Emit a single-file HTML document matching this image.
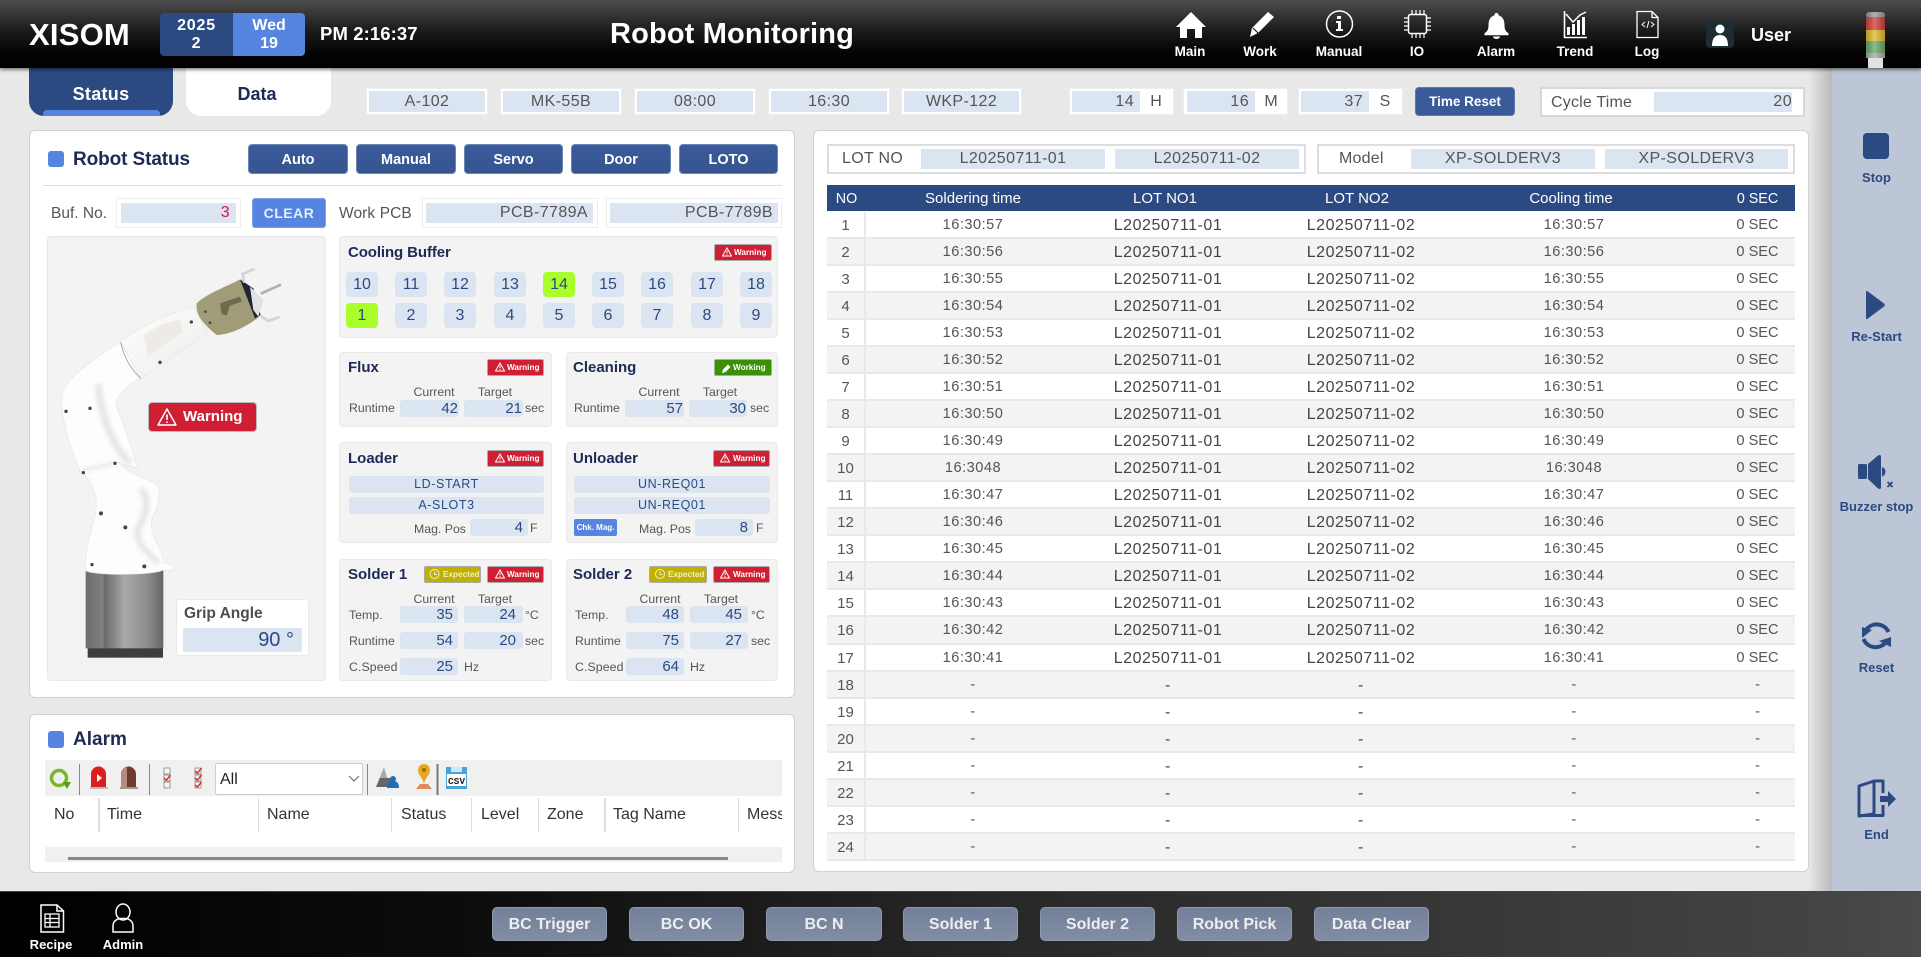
<!DOCTYPE html>
<html lang="en"><head><meta charset="utf-8"><title>Robot Monitoring</title>
<style>
html,body{margin:0;padding:0;width:1921px;height:957px;overflow:hidden;background:#e8e8e8;font-family:"Liberation Sans",Arial,sans-serif;color:#555}
div,span{box-sizing:border-box}
.a{position:absolute}
.t{position:absolute;height:20px;line-height:20px;white-space:nowrap;margin-top:1px}
.c{transform:translateX(-50%)}
.o{position:absolute;background:#fff;border:1px solid #eee}
.f{position:absolute;background:#dbe5f1;color:#555;font-size:16px;text-align:center;letter-spacing:.4px;white-space:nowrap}
.n{color:#2c4a82;font-size:15px;text-align:right;border-radius:3px;height:17px;line-height:17px;letter-spacing:0}
.nav{position:absolute;top:43px;height:18px;line-height:18px;font-size:13.5px;font-weight:bold;color:#fff;transform:translateX(-50%);white-space:nowrap}
.card{position:absolute;background:#fff;border:1px solid #d2d2d2;border-radius:6px}
.btn{position:absolute;top:144px;height:30px;line-height:30px;text-align:center;color:#fff;font-size:14.5px;font-weight:bold;background:linear-gradient(#3a5a9c,#37558f);border:1px solid #6c86b8;border-radius:4px}
.p{position:absolute;background:#f3f3f3;border:1px solid #e9e9e9;border-radius:4px}
.h{position:absolute;height:20px;line-height:20px;font-size:15px;font-weight:bold;color:#1e2a55;white-space:nowrap;margin-top:1px}
.b{position:absolute;height:17px;line-height:15px;border:1px solid #aaa;border-radius:2px;color:#fff;font-size:8.2px;font-weight:bold;padding-left:19px;white-space:nowrap}
.w{background:#d01f35}.g{background:#3a9006}.e{background:#c2b000}
.cell{position:absolute;width:32px;height:25px;line-height:25px;background:#dbe5f1;border-radius:4px;text-align:center;font-size:16px;color:#2c4a82}
.on{background:#aaff2a}
.l{font-size:12.3px;color:#555;margin-top:0}
.cu{margin-top:1px}
.bar{position:absolute;height:17px;line-height:17px;background:#dbe5f1;border-radius:3px;color:#2c4a82;font-size:12.5px;text-align:center;letter-spacing:.6px}
.fb{position:absolute;top:907px;height:34px;line-height:33px;text-align:center;color:#eee;font-weight:bold;font-size:16px;background:linear-gradient(#74809a,#818da3);border:1px solid #8d98ab;border-radius:5px}
.sl{position:absolute;left:1832px;width:89px;text-align:center;color:#2c4a82;font-weight:bold;font-size:13px;height:18px;line-height:18px;white-space:nowrap;margin-top:1px}
#tb{position:absolute;left:827px;top:185px;width:968px}
#tb .hd{height:26px;line-height:28px;background:#2c4a82;color:#fff;font-size:15px;display:flex;text-align:center;margin-bottom:1px}
#tb .hd span:nth-child(1){width:39px;font-size:14.3px}
#tb .hd span:nth-child(2){width:214px}
#tb .hd span:nth-child(3){width:170px}
#tb .hd span:nth-child(4){width:214px}
#tb .hd span:nth-child(5){width:214px}
#tb .hd span:nth-child(6){width:117px;padding-left:42px;font-size:14.3px}
#tb .r{display:flex;height:27.04px;line-height:27px;border-bottom:2px solid #e9e9e9;background:#fff;text-align:center;font-size:14.6px;letter-spacing:.5px;color:#555}
#tb .r:nth-child(odd){background:#f3f3f3}
#tb .r span:nth-child(1){width:39px;border-right:2px solid #e9e9e9;font-size:15px;letter-spacing:0}
#tb .r span:nth-child(2){width:214px}
#tb .r span:nth-child(3){width:176px;font-size:16px;letter-spacing:.55px;color:#444}
#tb .r span:nth-child(4){width:210px;font-size:16px;letter-spacing:.55px;color:#444}
#tb .r span:nth-child(5){width:216px}
#tb .r span:nth-child(6){width:113px;padding-left:38px;letter-spacing:0}
svg#ov{position:absolute;left:0;top:0;z-index:5;pointer-events:none}
</style></head><body>

<!-- main surfaces -->
<div class="a" style="left:1808px;top:68px;width:24px;height:823px;background:linear-gradient(to right,rgba(0,0,0,0),rgba(0,0,0,.2))"></div>
<div class="a" style="left:1832px;top:68px;width:89px;height:823px;background:#bcc6d6"></div>

<!-- tabs -->
<div class="a" style="left:29px;top:60px;width:144px;height:56px;background:#2c4a82;border-radius:0 0 15px 15px;overflow:hidden"><div class="a" style="left:14px;top:50px;width:117px;height:8px;background:#5585e0;border-radius:4px 4px 0 0"></div></div>
<div class="t c" style="left:101px;top:83px;color:#fff;font-size:18px;font-weight:bold;letter-spacing:.3px">Status</div>
<div class="a" style="left:186px;top:60px;width:145px;height:56px;background:#fff;border-radius:0 0 15px 15px"></div>
<div class="t c" style="left:257px;top:83px;color:#1e2a55;font-size:18px;font-weight:bold">Data</div>

<!-- header -->
<div class="a" style="left:0;top:0;width:1921px;height:68px;background:linear-gradient(#4e4e4e,#1e1e1e 42%,#050505 75%,#000);box-shadow:0 2px 3px rgba(0,0,0,.45)"></div>
<div class="a" style="left:29px;top:17px;height:36px;line-height:36px;font-size:31px;font-weight:bold;color:#fff;letter-spacing:.2px;z-index:2">XISOM</div>
<div class="a" style="left:160px;top:13px;width:73px;height:43px;background:#2c4a82;border-radius:4px 0 0 4px;color:#fff;text-align:center;font-size:16px;font-weight:bold;letter-spacing:.8px;line-height:18px;padding-top:4px">2025<br>2</div>
<div class="a" style="left:233px;top:13px;width:72px;height:43px;background:#5585e0;border-radius:0 4px 4px 0;color:#fff;text-align:center;font-size:16px;font-weight:bold;line-height:18px;padding-top:4px">Wed<br>19</div>
<div class="t" style="left:320px;top:23px;color:#fff;font-size:18.5px;font-weight:bold;letter-spacing:.1px">PM 2:16:37</div>
<div class="a" style="left:610px;top:15px;height:38px;line-height:38px;color:#fff;font-size:29px;font-weight:bold;letter-spacing:.15px;white-space:nowrap">Robot Monitoring</div>
<div class="nav" style="left:1190px">Main</div>
<div class="nav" style="left:1260px">Work</div>
<div class="nav" style="left:1339px">Manual</div>
<div class="nav" style="left:1417px">IO</div>
<div class="nav" style="left:1496px">Alarm</div>
<div class="nav" style="left:1575px">Trend</div>
<div class="nav" style="left:1647px">Log</div>
<div class="t" style="left:1751px;top:24px;color:#fff;font-size:18px;font-weight:bold">User</div>

<!-- info strip -->
<div class="o" style="left:366px;top:88px;width:122px;height:27px"></div><div class="f" style="left:369px;top:91px;width:116px;height:21px;line-height:21px">A-102</div>
<div class="o" style="left:500px;top:88px;width:122px;height:27px"></div><div class="f" style="left:503px;top:91px;width:116px;height:21px;line-height:21px">MK-55B</div>
<div class="o" style="left:634px;top:88px;width:122px;height:27px"></div><div class="f" style="left:637px;top:91px;width:116px;height:21px;line-height:21px">08:00</div>
<div class="o" style="left:768px;top:88px;width:122px;height:27px"></div><div class="f" style="left:771px;top:91px;width:116px;height:21px;line-height:21px">16:30</div>
<div class="o" style="left:901px;top:88px;width:121px;height:27px"></div><div class="f" style="left:904px;top:91px;width:115px;height:21px;line-height:21px">WKP-122</div>
<div class="o" style="left:1069px;top:88px;width:105px;height:27px"></div><div class="f" style="left:1072px;top:91px;width:68px;height:21px;line-height:21px;text-align:right;padding-right:6px">14</div><div class="t c" style="left:1156px;top:91px;font-size:16px">H</div>
<div class="o" style="left:1183px;top:88px;width:105px;height:27px"></div><div class="f" style="left:1187px;top:91px;width:68px;height:21px;line-height:21px;text-align:right;padding-right:6px">16</div><div class="t c" style="left:1271px;top:91px;font-size:16px">M</div>
<div class="o" style="left:1298px;top:88px;width:105px;height:27px"></div><div class="f" style="left:1301px;top:91px;width:68px;height:21px;line-height:21px;text-align:right;padding-right:6px">37</div><div class="t c" style="left:1385px;top:91px;font-size:16px">S</div>
<div class="a" style="left:1415px;top:87px;width:100px;height:29px;line-height:27px;text-align:center;background:#3b5a9a;border:1px solid #5c78b0;border-radius:4px;color:#fff;font-size:13.5px;font-weight:bold;white-space:nowrap">Time Reset</div>
<div class="a" style="left:1540px;top:87px;width:265px;height:30px;background:#fff;border:2px solid #d8d8d8"></div>
<div class="t" style="left:1551px;top:92px;font-size:16px;letter-spacing:.2px">Cycle Time</div>
<div class="f" style="left:1654px;top:92px;width:138px;height:20px;line-height:20px;text-align:right">20</div>

<!-- Robot status card -->
<div class="card" style="left:29px;top:130px;width:766px;height:568px"></div>
<div class="a" style="left:48px;top:151px;width:16px;height:16px;background:#5585e0;border-radius:3px"></div>
<div class="t" style="left:73px;top:149px;font-size:19px;font-weight:bold;color:#1e2a55;letter-spacing:-.1px">Robot Status</div>
<div class="btn" style="left:248px;width:100px">Auto</div>
<div class="btn" style="left:356px;width:100px">Manual</div>
<div class="btn" style="left:464px;width:99px">Servo</div>
<div class="btn" style="left:571px;width:100px">Door</div>
<div class="btn" style="left:679px;width:99px">LOTO</div>
<div class="a" style="left:43px;top:185px;width:739px;height:1px;background:#ddd"></div>

<div class="t" style="left:51px;top:203px;font-size:15.5px">Buf. No.</div>
<div class="o" style="left:116px;top:198px;width:125px;height:30px"></div>
<div class="f" style="left:121px;top:203px;width:115px;height:20px;line-height:20px;text-align:right;padding-right:6px;color:#d8104e">3</div>
<div class="a" style="left:252px;top:198px;width:74px;height:30px;line-height:28px;background:#5585e0;border:1px solid #7a9fe6;border-radius:3px;color:#e6effa;font-size:14px;font-weight:bold;text-align:center;letter-spacing:.5px">CLEAR</div>
<div class="t" style="left:339px;top:203px;font-size:15.5px;letter-spacing:.1px">Work PCB</div>
<div class="o" style="left:422px;top:198px;width:176px;height:30px"></div>
<div class="f" style="left:426px;top:203px;width:167px;height:20px;line-height:20px;text-align:right;padding-right:5px">PCB-7789A</div>
<div class="o" style="left:606px;top:198px;width:176px;height:30px"></div>
<div class="f" style="left:610px;top:203px;width:168px;height:20px;line-height:20px;text-align:right;padding-right:5px">PCB-7789B</div>

<!-- robot panel -->
<div class="p" style="left:47px;top:236px;width:279px;height:445px"></div>
<div class="a" style="left:148px;top:402px;width:109px;height:30px;line-height:28px;background:#d01f35;border:1px solid #bbb;border-radius:4px;color:#fff;font-size:15px;font-weight:bold;padding-left:34px">Warning</div>
<div class="a" style="left:176px;top:599px;width:133px;height:57px;background:#fff;border:1px solid #e9e9e9;border-radius:3px"></div>
<div class="t" style="left:184px;top:603px;font-size:15.5px;font-weight:bold;color:#4d4d4d">Grip Angle</div>
<div class="a" style="left:183px;top:628px;width:119px;height:24px;line-height:24px;background:#dbe5f1;border-radius:2px;text-align:right;padding-right:8px;color:#2c4a82;font-size:20px">90 °</div>

<!-- cooling buffer -->
<div class="p" style="left:339px;top:236px;width:439px;height:102px"></div>
<div class="h" style="left:348px;top:242px;letter-spacing:-.1px">Cooling Buffer</div>
<div class="b w" style="left:714px;top:244px;width:58px">Warning</div>
<div class="cell" style="left:346px;top:272px">10</div><div class="cell" style="left:395px;top:272px">11</div><div class="cell" style="left:444px;top:272px">12</div><div class="cell" style="left:494px;top:272px">13</div><div class="cell on" style="left:543px;top:272px">14</div><div class="cell" style="left:592px;top:272px">15</div><div class="cell" style="left:641px;top:272px">16</div><div class="cell" style="left:691px;top:272px">17</div><div class="cell" style="left:740px;top:272px">18</div>
<div class="cell on" style="left:346px;top:303px">1</div><div class="cell" style="left:395px;top:303px">2</div><div class="cell" style="left:444px;top:303px">3</div><div class="cell" style="left:494px;top:303px">4</div><div class="cell" style="left:543px;top:303px">5</div><div class="cell" style="left:592px;top:303px">6</div><div class="cell" style="left:641px;top:303px">7</div><div class="cell" style="left:691px;top:303px">8</div><div class="cell" style="left:740px;top:303px">9</div>

<!-- flux -->
<div class="p" style="left:339px;top:352px;width:213px;height:75px"></div>
<div class="h" style="left:348px;top:357px">Flux</div>
<div class="b w" style="left:487px;top:359px;width:57px">Warning</div>
<div class="t c l cu" style="left:434px;top:381px">Current</div><div class="t c l cu" style="left:495px;top:381px">Target</div>
<div class="t l" style="left:349px;top:398px">Runtime</div>
<div class="f n" style="left:400px;top:400px;width:59px;padding-right:1px">42</div>
<div class="f n" style="left:464px;top:400px;width:59px;padding-right:1px">21</div>
<div class="t l" style="left:525px;top:398px">sec</div>

<!-- cleaning -->
<div class="p" style="left:566px;top:352px;width:212px;height:75px"></div>
<div class="h" style="left:573px;top:357px">Cleaning</div>
<div class="b g" style="left:714px;top:359px;width:58px;padding-left:18px">Working</div>
<div class="t c l cu" style="left:659px;top:381px">Current</div><div class="t c l cu" style="left:720px;top:381px">Target</div>
<div class="t l" style="left:574px;top:398px">Runtime</div>
<div class="f n" style="left:625px;top:400px;width:59px;padding-right:1px">57</div>
<div class="f n" style="left:689px;top:400px;width:58px;padding-right:1px">30</div>
<div class="t l" style="left:750px;top:398px">sec</div>

<!-- loader -->
<div class="p" style="left:339px;top:442px;width:213px;height:101px"></div>
<div class="h" style="left:348px;top:448px">Loader</div>
<div class="b w" style="left:487px;top:450px;width:57px">Warning</div>
<div class="bar" style="left:349px;top:476px;width:195px">LD-START</div>
<div class="bar" style="left:349px;top:497px;width:195px">A-SLOT3</div>
<div class="t l" style="left:414px;top:519px">Mag. Pos</div>
<div class="f n" style="left:470px;top:519px;width:58px;padding-right:5px">4</div>
<div class="t l" style="left:530px;top:518px">F</div>

<!-- unloader -->
<div class="p" style="left:566px;top:442px;width:212px;height:101px"></div>
<div class="h" style="left:573px;top:448px">Unloader</div>
<div class="b w" style="left:713px;top:450px;width:57px">Warning</div>
<div class="bar" style="left:574px;top:476px;width:196px">UN-REQ01</div>
<div class="bar" style="left:574px;top:497px;width:196px">UN-REQ01</div>
<div class="a" style="left:574px;top:519px;width:43px;height:17px;line-height:17px;background:#5585e0;border-radius:2px;color:#fff;font-size:8px;font-weight:bold;text-align:center;white-space:nowrap">Chk. Mag.</div>
<div class="t l" style="left:639px;top:519px">Mag. Pos</div>
<div class="f n" style="left:695px;top:519px;width:58px;padding-right:5px">8</div>
<div class="t l" style="left:756px;top:518px">F</div>

<!-- solder 1 -->
<div class="p" style="left:339px;top:559px;width:213px;height:122px"></div>
<div class="h" style="left:348px;top:564px">Solder 1</div>
<div class="b e" style="left:424px;top:566px;width:57px;padding-left:18px;color:#f1efc8">Expected</div>
<div class="b w" style="left:487px;top:566px;width:57px">Warning</div>
<div class="t c l cu" style="left:434px;top:588px">Current</div><div class="t c l cu" style="left:495px;top:588px">Target</div>
<div class="t l" style="left:349px;top:605px">Temp.</div>
<div class="f n" style="left:400px;top:606px;width:58px;padding-right:5px">35</div><div class="f n" style="left:464px;top:606px;width:59px;padding-right:7px">24</div><div class="t l" style="left:525px;top:605px">°C</div>
<div class="t l" style="left:349px;top:631px">Runtime</div>
<div class="f n" style="left:400px;top:632px;width:58px;padding-right:5px">54</div><div class="f n" style="left:464px;top:632px;width:59px;padding-right:7px">20</div><div class="t l" style="left:525px;top:631px">sec</div>
<div class="t l" style="left:349px;top:657px;letter-spacing:.1px">C.Speed</div>
<div class="f n" style="left:400px;top:658px;width:58px;padding-right:5px">25</div><div class="t l" style="left:464px;top:657px">Hz</div>

<!-- solder 2 -->
<div class="p" style="left:566px;top:559px;width:212px;height:122px"></div>
<div class="h" style="left:573px;top:564px">Solder 2</div>
<div class="b e" style="left:649px;top:566px;width:58px;padding-left:18px;color:#f1efc8">Expected</div>
<div class="b w" style="left:713px;top:566px;width:57px">Warning</div>
<div class="t c l cu" style="left:660px;top:588px">Current</div><div class="t c l cu" style="left:721px;top:588px">Target</div>
<div class="t l" style="left:575px;top:605px">Temp.</div>
<div class="f n" style="left:626px;top:606px;width:58px;padding-right:5px">48</div><div class="f n" style="left:690px;top:606px;width:58px;padding-right:6px">45</div><div class="t l" style="left:751px;top:605px">°C</div>
<div class="t l" style="left:575px;top:631px">Runtime</div>
<div class="f n" style="left:626px;top:632px;width:58px;padding-right:5px">75</div><div class="f n" style="left:690px;top:632px;width:58px;padding-right:6px">27</div><div class="t l" style="left:751px;top:631px">sec</div>
<div class="t l" style="left:575px;top:657px;letter-spacing:.1px">C.Speed</div>
<div class="f n" style="left:626px;top:658px;width:58px;padding-right:5px">64</div><div class="t l" style="left:690px;top:657px">Hz</div>

<!-- alarm card -->
<div class="card" style="left:29px;top:714px;width:766px;height:159px"></div>
<div class="a" style="left:48px;top:731px;width:16px;height:17px;background:#5585e0;border-radius:3px"></div>
<div class="t" style="left:73px;top:729px;font-size:19px;font-weight:bold;color:#1e2a55">Alarm</div>
<div class="a" style="left:45px;top:760px;width:737px;height:36px;background:#f0f0f0"></div>
<div class="a" style="left:215px;top:763px;width:148px;height:32px;background:#fff;border:1px solid #ccc;border-radius:2px"></div>
<div class="t" style="left:220px;top:769px;font-size:16px;color:#222">All</div>
<div class="t" style="left:54px;top:804px;font-size:16px;color:#333">No</div>
<div class="t" style="left:107px;top:804px;font-size:16px;color:#333">Time</div>
<div class="t" style="left:267px;top:804px;font-size:16px;color:#333">Name</div>
<div class="t" style="left:401px;top:804px;font-size:16px;color:#333">Status</div>
<div class="t" style="left:481px;top:804px;font-size:16px;color:#333">Level</div>
<div class="t" style="left:547px;top:804px;font-size:16px;color:#333">Zone</div>
<div class="t" style="left:613px;top:804px;font-size:16px;color:#333">Tag Name</div>
<div class="t" style="left:747px;top:804px;width:35px;overflow:hidden;font-size:16px;color:#333">Message</div>
<div class="a" style="left:98px;top:798px;width:2px;height:34px;background:#ddd"></div>
<div class="a" style="left:258px;top:798px;width:1px;height:34px;background:#ddd"></div>
<div class="a" style="left:391px;top:798px;width:1px;height:34px;background:#ddd"></div>
<div class="a" style="left:471px;top:798px;width:1px;height:34px;background:#ddd"></div>
<div class="a" style="left:538px;top:798px;width:1px;height:34px;background:#ddd"></div>
<div class="a" style="left:604px;top:798px;width:2px;height:34px;background:#ddd"></div>
<div class="a" style="left:738px;top:798px;width:1px;height:34px;background:#ddd"></div>
<div class="a" style="left:45px;top:847px;width:737px;height:15px;background:#f0f0f0"></div>
<div class="a" style="left:68px;top:857px;width:660px;height:3px;background:#888"></div>

<!-- data card -->
<div class="card" style="left:813px;top:130px;width:996px;height:742px"></div>
<div class="a" style="left:827px;top:144px;width:479px;height:30px;background:#fff;border:2px solid #ddd"></div>
<div class="t" style="left:842px;top:148px;font-size:16px;letter-spacing:.3px">LOT NO</div>
<div class="f" style="left:921px;top:149px;width:184px;height:20px;line-height:20px">L20250711-01</div>
<div class="f" style="left:1115px;top:149px;width:184px;height:20px;line-height:20px">L20250711-02</div>
<div class="a" style="left:1317px;top:144px;width:478px;height:30px;background:#fff;border:2px solid #ddd"></div>
<div class="t" style="left:1339px;top:148px;font-size:16px;letter-spacing:.2px">Model</div>
<div class="f" style="left:1411px;top:149px;width:184px;height:20px;line-height:20px">XP-SOLDERV3</div>
<div class="f" style="left:1605px;top:149px;width:183px;height:20px;line-height:20px">XP-SOLDERV3</div>

<div id="tb">
<div class="hd"><span>NO</span><span>Soldering time</span><span>LOT NO1</span><span>LOT NO2</span><span>Cooling time</span><span>0 SEC</span></div>
<div class="r"><span>1</span><span>16:30:57</span><span>L20250711-01</span><span>L20250711-02</span><span>16:30:57</span><span>0 SEC</span></div>
<div class="r"><span>2</span><span>16:30:56</span><span>L20250711-01</span><span>L20250711-02</span><span>16:30:56</span><span>0 SEC</span></div>
<div class="r"><span>3</span><span>16:30:55</span><span>L20250711-01</span><span>L20250711-02</span><span>16:30:55</span><span>0 SEC</span></div>
<div class="r"><span>4</span><span>16:30:54</span><span>L20250711-01</span><span>L20250711-02</span><span>16:30:54</span><span>0 SEC</span></div>
<div class="r"><span>5</span><span>16:30:53</span><span>L20250711-01</span><span>L20250711-02</span><span>16:30:53</span><span>0 SEC</span></div>
<div class="r"><span>6</span><span>16:30:52</span><span>L20250711-01</span><span>L20250711-02</span><span>16:30:52</span><span>0 SEC</span></div>
<div class="r"><span>7</span><span>16:30:51</span><span>L20250711-01</span><span>L20250711-02</span><span>16:30:51</span><span>0 SEC</span></div>
<div class="r"><span>8</span><span>16:30:50</span><span>L20250711-01</span><span>L20250711-02</span><span>16:30:50</span><span>0 SEC</span></div>
<div class="r"><span>9</span><span>16:30:49</span><span>L20250711-01</span><span>L20250711-02</span><span>16:30:49</span><span>0 SEC</span></div>
<div class="r"><span>10</span><span>16:3048</span><span>L20250711-01</span><span>L20250711-02</span><span>16:3048</span><span>0 SEC</span></div>
<div class="r"><span>11</span><span>16:30:47</span><span>L20250711-01</span><span>L20250711-02</span><span>16:30:47</span><span>0 SEC</span></div>
<div class="r"><span>12</span><span>16:30:46</span><span>L20250711-01</span><span>L20250711-02</span><span>16:30:46</span><span>0 SEC</span></div>
<div class="r"><span>13</span><span>16:30:45</span><span>L20250711-01</span><span>L20250711-02</span><span>16:30:45</span><span>0 SEC</span></div>
<div class="r"><span>14</span><span>16:30:44</span><span>L20250711-01</span><span>L20250711-02</span><span>16:30:44</span><span>0 SEC</span></div>
<div class="r"><span>15</span><span>16:30:43</span><span>L20250711-01</span><span>L20250711-02</span><span>16:30:43</span><span>0 SEC</span></div>
<div class="r"><span>16</span><span>16:30:42</span><span>L20250711-01</span><span>L20250711-02</span><span>16:30:42</span><span>0 SEC</span></div>
<div class="r"><span>17</span><span>16:30:41</span><span>L20250711-01</span><span>L20250711-02</span><span>16:30:41</span><span>0 SEC</span></div>
<div class="r"><span>18</span><span>-</span><span>-</span><span>-</span><span>-</span><span>-</span></div>
<div class="r"><span>19</span><span>-</span><span>-</span><span>-</span><span>-</span><span>-</span></div>
<div class="r"><span>20</span><span>-</span><span>-</span><span>-</span><span>-</span><span>-</span></div>
<div class="r"><span>21</span><span>-</span><span>-</span><span>-</span><span>-</span><span>-</span></div>
<div class="r"><span>22</span><span>-</span><span>-</span><span>-</span><span>-</span><span>-</span></div>
<div class="r"><span>23</span><span>-</span><span>-</span><span>-</span><span>-</span><span>-</span></div>
<div class="r"><span>24</span><span>-</span><span>-</span><span>-</span><span>-</span><span>-</span></div>
</div>

<!-- sidebar labels -->
<div class="sl" style="top:168px">Stop</div>
<div class="sl" style="top:327px">Re-Start</div>
<div class="sl" style="top:497px">Buzzer stop</div>
<div class="sl" style="top:658px">Reset</div>
<div class="sl" style="top:825px">End</div>

<!-- footer -->
<div class="a" style="left:0;top:891px;width:1921px;height:66px;background:linear-gradient(to right,#000,#0d0d0d 25%,#262626 50%,#444 95%,#4a4a4a);border-top:1px solid #444"></div>
<div class="t c" style="left:51px;top:934px;color:#fff;font-size:13px;font-weight:bold;z-index:2">Recipe</div>
<div class="t c" style="left:123px;top:934px;color:#fff;font-size:13px;font-weight:bold;z-index:2">Admin</div>
<div class="fb" style="left:492px;width:115px">BC Trigger</div>
<div class="fb" style="left:629px;width:115px">BC OK</div>
<div class="fb" style="left:766px;width:116px">BC N</div>
<div class="fb" style="left:903px;width:115px">Solder 1</div>
<div class="fb" style="left:1040px;width:115px">Solder 2</div>
<div class="fb" style="left:1177px;width:115px">Robot Pick</div>
<div class="fb" style="left:1314px;width:115px">Data Clear</div>

<!-- all icons -->
<svg id="ov" width="1921" height="957" viewBox="0 0 1921 957" xmlns="http://www.w3.org/2000/svg">
<defs>
<linearGradient id="bs" x1="0" x2="1" y1="0" y2="0"><stop offset="0" stop-color="#6c6c6c"/><stop offset=".22" stop-color="#808080"/><stop offset=".24" stop-color="#6a6a6a"/><stop offset=".5" stop-color="#a8a8a8"/><stop offset=".8" stop-color="#8c8c8c"/><stop offset="1" stop-color="#666"/></linearGradient>
<linearGradient id="tw" x1="0" x2="1" y1="0" y2="0"><stop offset="0" stop-color="#000" stop-opacity=".18"/><stop offset=".45" stop-color="#fff" stop-opacity=".22"/><stop offset="1" stop-color="#000" stop-opacity=".2"/></linearGradient>
<linearGradient id="wb" x1="0" x2="1" y1="0" y2="1"><stop offset="0" stop-color="#ffffff"/><stop offset="1" stop-color="#ecebe9"/></linearGradient>
<filter id="sf" x="-10%" y="-10%" width="120%" height="120%"><feGaussianBlur stdDeviation="7"/></filter>
<symbol id="tri" viewBox="0 0 10 10"><path d="M5 1 L9.5 9 H.5Z" fill="none" stroke="#fff" stroke-width="1"/><path d="M5 3.6V6.3M5 7.1V8" stroke="#fff" stroke-width="1"/></symbol>
</defs>

<!-- header icons -->
<g fill="#fff">
<path d="M1191 12 L1206 27 H1202 V38 H1195 V29 H1187 V38 H1180 V27 H1176Z"/>
<path d="M1250 37 L1252 28 L1268 12 L1274 17 L1258 33Z"/>
<path d="M1496.5 13 c-1.5 0 -2 1 -2 2.2 c-5 1.5 -6 6 -6 10 c0 4 -1 6 -4 8 v2 h24 v-2 c-3 -2 -4 -4 -4 -8 c0 -4 -1 -8.5 -6 -10 c0 -1.200 -.5 -2.200 -2 -2.200Z M1493 36.500 a3.500 2.500 0 0 0 7 0Z"/>
<rect x="1706" y="21" width="28" height="27" rx="4" fill="#1d2c33"/>
<circle cx="1720" cy="29" r="4.500"/><path d="M1712 46 c0-9 4-11 8-11 s8 2 8 11Z"/>
<path d="M1337 16h4v3h-4zM1336 21h5v8h2v2h-7v-2h2v-6h-2z"/>
<rect x="1567" y="27" width="3" height="8"/><rect x="1572" y="24" width="3" height="11"/><rect x="1577" y="20" width="3" height="15"/><rect x="1582" y="17" width="3" height="18"/>
</g>
<g fill="none" stroke="#fff">
<circle cx="1339.500" cy="24" r="13" stroke-width="1.500"/>
<path d="M1258 33 L1253 28" stroke="#000" stroke-width="1"/>
<rect x="1408.500" y="14.500" width="18" height="19" rx="2" stroke-width="1.500"/>
<path d="M1404 18h4M1404 22h4M1404 26h4M1404 30h4M1427 18h4M1427 22h4M1427 26h4M1427 30h4M1412 10v4M1416 10v4M1420 10v4M1424 10v4M1412 34v4M1416 34v4M1420 34v4M1424 34v4" stroke-width="1.200"/>
<path d="M1564.500 11 V37.500 H1587" stroke-width="1.600"/>
<path d="M1566 14 L1573 22 L1580 15 L1586 12" stroke-width="1.500"/>
<path d="M1637 11.500 H1652 L1658 17.500 V37.500 H1637Z M1652 11.500 V17.500 H1658" stroke-width="1.300"/>
<path d="M1645 22 l-3 2.500 l3 2.500 M1651 22 l3 2.500 l-3 2.500 M1649 21 l-2 7" stroke-width="1"/>
</g>
<!-- tower -->
<rect x="1866" y="12" width="19" height="6" fill="#9a9a9a" rx="3"/>
<rect x="1866" y="17" width="19" height="13" fill="#d0413f"/>
<rect x="1866" y="30" width="19" height="11" fill="#dfba2e"/>
<rect x="1866" y="41" width="19" height="12" fill="#68ab68"/>
<rect x="1866" y="53" width="19" height="5" fill="#aaa"/>
<rect x="1866" y="12" width="19" height="46" fill="url(#tw)"/>
<rect x="1868" y="58" width="15" height="10" fill="#e2e2e2"/>

<!-- sidebar icons -->
<g fill="#2c4a82">
<rect x="1863" y="133" width="26" height="26" rx="4"/>
<path d="M1866 292.500 Q1866 290 1868 291.500 L1884 303.500 Q1885.500 305 1884 306.500 L1868 318.500 Q1866 320 1866 317.500Z"/>
<rect x="1858" y="464" width="9" height="15" rx="1.500"/>
<path d="M1868 464 L1878 455.500 Q1881 454 1881 457 V487 Q1881 490 1878 488.500 L1868 479Z"/>
<path d="M1882 467 a5 5 0 0 1 0 9.500Z"/>
<path d="M1862 627 L1872 630 L1862 638Z"/>
<path d="M1891 637 L1891 647 L1879 641Z"/>
<path d="M1880 796 h8 v-5 l8 8 l-8 8 v-5 h-8Z"/>
</g>
<g fill="none" stroke="#2c4a82">
<path d="M1892.500 487 l-5 -5 M1892.500 482 l-5 5" stroke-width="1.800"/>
<path d="M1866 630 A13 13 0 0 1 1888.500 632" stroke-width="4"/>
<path d="M1886 642 A13 13 0 0 1 1863.500 639" stroke-width="4"/>
<path d="M1859 786 L1874 781 V814 L1859 816Z" stroke-width="3" stroke-linejoin="round"/>
<path d="M1874 781 H1883 V793 M1883 805 V815.500 H1859" stroke-width="3" stroke-linejoin="round"/>
</g>

<!-- footer icons -->
<g fill="none" stroke="#fff">
<path d="M41 905 H57 L63.500 911 V932 H41Z M57 905 V911 H63.500" stroke-width="1.500"/>
<rect x="45" y="914" width="14" height="13" stroke-width="1.300"/>
<path d="M45 918.500h14M45 922.500h14M50 914v13" stroke-width="1.300"/>
<ellipse cx="123" cy="912" rx="7" ry="8" stroke-width="1.500"/>
<path d="M113 932 v-6 c0-5 4-7 7-7.500 h6 c3 .5 7 2.500 7 7.500 v6z" stroke-width="1.500"/>
</g>

<!-- badge icons -->
<use href="#tri" x="495" y="362" width="10" height="10"/>
<use href="#tri" x="722" y="247" width="10" height="10"/>
<use href="#tri" x="495" y="453" width="10" height="10"/>
<use href="#tri" x="720" y="453" width="10" height="10"/>
<use href="#tri" x="495" y="569" width="10" height="10"/>
<use href="#tri" x="720" y="569" width="10" height="10"/>
<path d="M722 373 l1 -3.500 l5 -5 l2.500 2.500 l-5 5Z" fill="#fff"/>
<g fill="none" stroke="#f1efc8" stroke-width="1">
<circle cx="434.500" cy="574" r="4.500"/><path d="M434.500 571.500v3h2.500"/>
<circle cx="660" cy="574" r="4.500"/><path d="M660 571.500v3h2.500"/>
</g>
<g transform="translate(148 402)" fill="none" stroke="#fff"><path d="M19 7 L28 23 H10Z" stroke-width="1.500" stroke-linejoin="round"/><path d="M19 12.500V18M19 19.500V21" stroke-width="1.700"/></g>

<!-- toolbar icons -->
<g>
<path d="M79.500 764v31M149.500 764v31M367.500 764v31" stroke="#888" stroke-width="1"/>
<path d="M437.500 764v31" stroke="#777" stroke-width="2"/>
<circle cx="59" cy="778" r="7.500" fill="none" stroke="#7ab52a" stroke-width="3.500"/>
<path d="M63 782 h8 l-4 7Z" fill="#5f9a1a"/>
<path d="M91 787 V774 a7.500 7.500 0 0 1 15 0 V787Z" fill="#d91f1f"/><rect x="90" y="787" width="18" height="2" fill="#bbb"/><path d="M97 774 l5 4 l-5 4Z" fill="#fff"/>
<path d="M121 787 V774 a7.500 7.500 0 0 1 15 0 V787Z" fill="#6e3a2c"/><path d="M121 787 V774 a7 7 0 0 1 6 -7 V787Z" fill="#b98a82"/><rect x="120" y="787" width="18" height="2" fill="#999"/>
<g fill="#f4f4f4" stroke="#888" stroke-width=".8"><rect x="164" y="768" width="6" height="6"/><rect x="164" y="775" width="6" height="6"/><rect x="164" y="782" width="6" height="6"/><rect x="195" y="768" width="6" height="6"/><rect x="195" y="775" width="6" height="6"/><rect x="195" y="782" width="6" height="6"/></g>
<path d="M164 778l2.500 2 4-5M195 771l2.500 2 4-5M195 778l2.500 2 4-5M195 785l2.500 2 4-5" fill="none" stroke="#e02020" stroke-width="1.400"/>
<path d="M376 787 L384 767 L390 787Z" fill="#aaa"/><path d="M376 787 L380 778 H392 L394 787Z" fill="#666"/>
<circle cx="393" cy="779" r="3" fill="#1f6db5"/><path d="M387 788 c0-6 3-7 6-7 s6 1 6 7Z" fill="#1f6db5"/>
<path d="M418 770 a6 6 0 1 1 12 0 c0 5 -5 8 -6 14 c-1 -6 -6 -9 -6 -14Z" fill="#e6a823"/><circle cx="424" cy="770" r="2" fill="#a06b10"/>
<path d="M416 789 l4 -5 h8 l4 5Z" fill="#e08a5a"/>
<rect x="446" y="767" width="21" height="22" fill="#4aa3d8"/><rect x="451" y="767" width="11" height="5" fill="#cfe7f5"/><rect x="447" y="774" width="19" height="12" fill="#fff"/>
<text x="456.500" y="784" text-anchor="middle" font-family="Liberation Mono,monospace" font-size="9.500" font-weight="bold" fill="#222">CSV</text>
<path d="M349 776 l5 5 l5 -5" fill="none" stroke="#666" stroke-width="1"/>
</g>

<!-- robot arm -->
<g transform="translate(20 220) scale(.33333)">
<rect x="203" y="1282" width="226" height="31" fill="#3e3e3e"/>
<rect x="197" y="1050" width="233" height="235" fill="url(#bs)"/>
<path d="M197 1052 C195 1000 205 960 222 900 C235 850 230 810 200 770 L178 752 L290 722 C330 770 385 770 415 800 C425 850 400 880 395 900 C385 940 430 990 432 1030 L460 1035 L460 1050 L430 1050 C400 1066 230 1068 197 1052Z" fill="#fdfdfd" stroke="#e6e6e6" stroke-width="2"/>
<path d="M130 510 C150 470 190 440 300 365 L362 472 C320 500 280 530 290 560 C320 640 340 700 352 745 L290 725 L180 752 C150 680 125 600 125 540Z" fill="#fdfdfd" stroke="#e6e6e6" stroke-width="2"/>
<g filter="url(#sf)" fill="none" stroke="#e4e4e4" stroke-linecap="round">
<path d="M235 500 C245 580 265 660 325 725" stroke-width="20"/>
<path d="M365 810 C390 840 380 880 352 930 C350 980 390 1000 410 1025" stroke-width="18"/>
<path d="M195 750 L285 730" stroke-width="8"/>
</g>
<path d="M302 365 C360 320 440 280 522 262 L562 340 C500 380 430 430 362 475Z" fill="url(#wb)" stroke="#e6e6e6" stroke-width="2"/>
<path d="M370 345 C410 320 440 305 480 300 L490 335 C450 360 410 390 385 410Z" fill="#eeebe6"/>
<path d="M302 367 Q315 430 362 475" fill="none" stroke="#999" stroke-width="2.500"/>
<path d="M530 250 C560 220 620 200 660 178 L718 290 C680 320 630 345 590 345 C560 320 525 290 530 250Z" fill="#a19c78"/>
<path d="M600 250 l60 -20 l5 15 l-35 12 l-10 30 l-15 -5Z" fill="#6d6a4e"/>
<path d="M660 178 L700 205 L722 285 L705 295Z" fill="#1e2530"/>
<path d="M690 200 L730 240 L715 290 L700 270Z" fill="#dfe3e6"/>
<g fill="none" stroke="#cfd5d8" stroke-width="8" stroke-linecap="round"><path d="M672 185 L668 162 L700 148"/><path d="M725 220 L780 195" stroke="#a9b2b6"/><path d="M725 290 L745 303 L775 292"/></g>
<g fill="#444"><circle cx="138" cy="574" r="5"/><circle cx="210" cy="565" r="5"/><circle cx="285" cy="730" r="5"/><circle cx="190" cy="758" r="5"/><circle cx="243" cy="880" r="6"/><circle cx="316" cy="922" r="6"/><circle cx="216" cy="1034" r="5"/><circle cx="373" cy="1039" r="6"/><circle cx="420" cy="427" r="5"/><circle cx="514" cy="306" r="5"/><circle cx="556" cy="275" r="4"/><circle cx="570" cy="308" r="4"/></g>
</g>
</svg>
</body></html>
